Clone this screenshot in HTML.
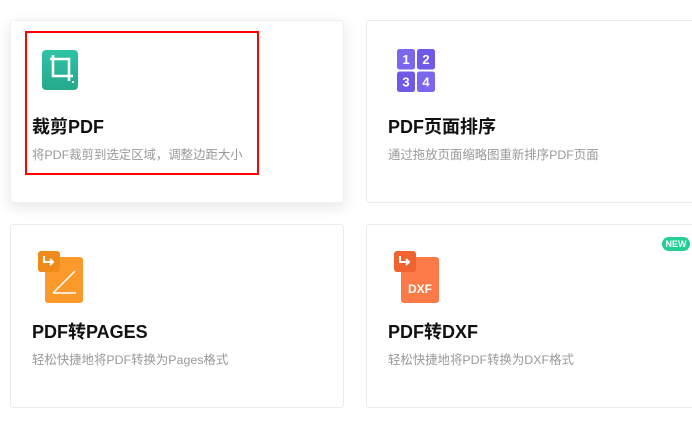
<!DOCTYPE html>
<html><head><meta charset="utf-8"><style>
*{margin:0;padding:0;box-sizing:border-box}
body{width:692px;height:422px;background:#fff;position:relative;overflow:hidden;font-family:"Liberation Sans","Noto Sans CJK SC",sans-serif}
.card{position:absolute;background:#fff;border:1px solid #ebebeb;border-radius:3px}
.sh{box-shadow:0 4px 14px rgba(0,0,0,.10);border-color:#f0f0f0}
.t{position:absolute;font-size:18px;font-weight:bold;color:#111;white-space:nowrap}
.d{position:absolute;font-size:12.4px;color:#999;white-space:nowrap}
.ab{position:absolute}
</style></head><body>
<div class="card sh" style="left:10px;top:20px;width:334px;height:183px"></div>
<div class="card" style="left:366px;top:20px;width:340px;height:183px"></div>
<div class="card" style="left:10px;top:224px;width:334px;height:184px"></div>
<div class="card" style="left:366px;top:224px;width:340px;height:184px"></div>
<div class="ab" style="left:25px;top:31px;width:234px;height:144px;border:2px solid #f00"></div>

<svg class="ab" style="left:42px;top:50px" width="36" height="40" viewBox="0 0 36 40">
<defs><linearGradient id="g" x1="0" y1="0" x2="0" y2="1"><stop offset="0" stop-color="#2fc3a6"/><stop offset="1" stop-color="#25a88c"/></linearGradient></defs>
<rect width="36" height="40" rx="4" fill="url(#g)"/>
<path d="M8 9H27V31M11 5V26H31" stroke="#fff" stroke-width="2.6" fill="none"/>
<rect x="30" y="31" width="2" height="2" fill="#fff"/>
</svg>
<div class="t" style="left:32px;top:113px">裁剪PDF</div>
<div class="d" style="left:32px;top:145px">将PDF裁剪到选定区域，调整边距大小</div>

<svg class="ab" style="left:397px;top:49px" width="38" height="43" viewBox="0 0 38 43" font-family="Liberation Sans" font-weight="bold" font-size="13" fill="#fff" text-anchor="middle">
<rect x="0" y="0" width="18" height="20.5" rx="2.5" fill="#7b66ee"/>
<rect x="20" y="0" width="18" height="20.5" rx="2.5" fill="#6f59e6"/>
<rect x="0" y="22.5" width="18" height="20.5" rx="2.5" fill="#6f59e6"/>
<rect x="20" y="22.5" width="18" height="20.5" rx="2.5" fill="#7b66ee"/>
<text x="9" y="15">1</text><text x="29" y="15">2</text><text x="9" y="37.5">3</text><text x="29" y="37.5">4</text>
</svg>
<div class="t" style="left:388px;top:113px">PDF页面排序</div>
<div class="d" style="left:388px;top:145px">通过拖放页面缩略图重新排序PDF页面</div>

<svg class="ab" style="left:38px;top:251px" width="46" height="52" viewBox="0 0 46 52">
<rect x="7" y="6" width="38" height="46" rx="3" fill="#fb9a2a"/>
<path d="M15 42L37 20M15 42H38" stroke="#fff" stroke-width="1.5" fill="none"/>
<rect x="0" y="0" width="22" height="21" rx="3" fill="#f08a1a"/>
<path d="M6 5V11H15M12 8L15 11L12 14" stroke="#fff" stroke-width="2" fill="none"/>
</svg>
<div class="t" style="left:32px;top:318px">PDF转PAGES</div>
<div class="d" style="left:32px;top:350px">轻松快捷地将PDF转换为Pages格式</div>

<svg class="ab" style="left:394px;top:251px" width="46" height="52" viewBox="0 0 46 52">
<rect x="7" y="6" width="38" height="46" rx="3" fill="#fb7a48"/>
<text x="26" y="42" font-family="Liberation Sans" font-weight="bold" font-size="12" fill="#fff" text-anchor="middle">DXF</text>
<rect x="0" y="0" width="22" height="21" rx="3" fill="#f0632f"/>
<path d="M6 5V11H15M12 8L15 11L12 14" stroke="#fff" stroke-width="2" fill="none"/>
</svg>
<div class="ab" style="left:662px;top:237px;width:28px;height:14px;border-radius:7px;background:#22cf96;color:#fff;font-size:9px;font-weight:bold;text-align:center;line-height:14px">NEW</div>
<div class="t" style="left:388px;top:318px">PDF转DXF</div>
<div class="d" style="left:388px;top:350px">轻松快捷地将PDF转换为DXF格式</div>
</body></html>
